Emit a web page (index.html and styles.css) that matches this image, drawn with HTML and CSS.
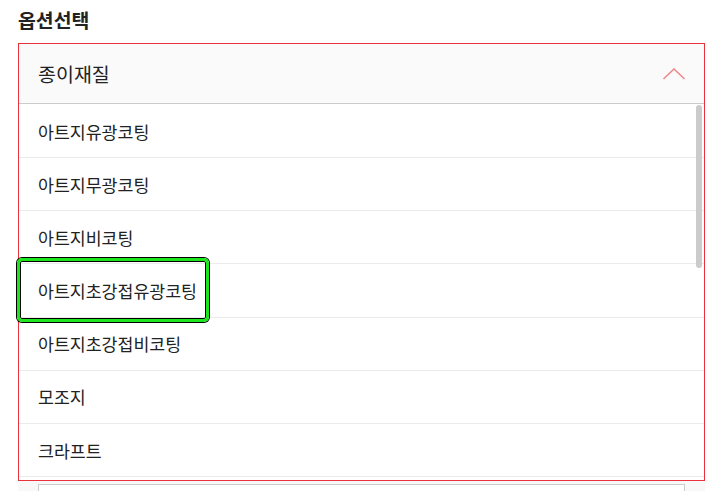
FILE: index.html
```html
<!DOCTYPE html>
<html lang="ko">
<head>
<meta charset="utf-8">
<link rel="stylesheet" href="styles.css">
</head>
<body>
<div class="title">옵션선택</div>
<div class="select">
  <div class="head">
    <span class="head-label">종이재질</span>
    <svg class="chev" width="24" height="12" viewBox="0 0 24 12"><path d="M1.5 11 L12 1 L22.5 11" fill="none" stroke="#f08a8a" stroke-width="1.6"/></svg>
  </div>
  <div class="list">
    <div class="item">아트지유광코팅</div>
    <div class="item">아트지무광코팅</div>
    <div class="item">아트지비코팅</div>
    <div class="item">아트지초강접유광코팅</div>
    <div class="item">아트지초강접비코팅</div>
    <div class="item">모조지</div>
    <div class="item">크라프트</div>
    <div class="item"></div>
    <div class="thumb"></div>
  </div>
</div>
<div class="more"><div class="field"></div></div>
<div class="highlight"></div>
</body>
</html>
```
FILE: styles.css
```css
html, body {
  margin: 0;
  padding: 0;
  background: #fff;
  height: 491px;
  overflow: hidden;
}
body {
  font-family: "Noto Sans CJK KR", "Noto Sans", sans-serif;
  color: #222;
  position: relative;
}
.title {
  padding: 8px 18px 11px;
  font-size: 19.4px;
  line-height: 24px;
  font-weight: 700;
  color: #222;
}
.select {
  margin: 0 23px 0 18px;
  border: 1px solid #e8323c;
}
.head {
  height: 59px;
  background: #fafafa;
  border-bottom: 1px solid #cccccc;
  display: flex;
  align-items: center;
  justify-content: space-between;
  padding: 0 18px 0 19px;
}
.head-label {
  font-size: 19.5px;
  line-height: 24px;
}
.chev {
  display: block;
}
.list {
  position: relative;
  height: 375px;
  padding-top: 1px;
  overflow: hidden;
  background: #fff;
}
.item {
  box-sizing: border-box;
  height: 53.17px;
  border-bottom: 1px solid #ebebeb;
  display: flex;
  align-items: center;
  padding-left: 19px;
  font-size: 17.3px;
  color: #222;
}
.thumb {
  position: absolute;
  left: 677px;
  top: 1px;
  width: 6px;
  height: 163px;
  border-radius: 3px;
  background: #cbcbcb;
}
.more {
  margin: 0 23px 0 18px;
  background: #f8f8f8;
  padding: 3px 20px 0 20px;
  height: 7px;
  overflow: hidden;
}
.field {
  height: 30px;
  background: #fff;
  border: 1px solid #cccccc;
}
.highlight {
  position: absolute;
  left: 17px;
  top: 258px;
  width: 186px;
  height: 58px;
  border: 3px solid #1ee61e;
  border-radius: 5px;
  box-shadow: 0 0 0 1px #000, inset 0 0 0 1px #000;
}
```
